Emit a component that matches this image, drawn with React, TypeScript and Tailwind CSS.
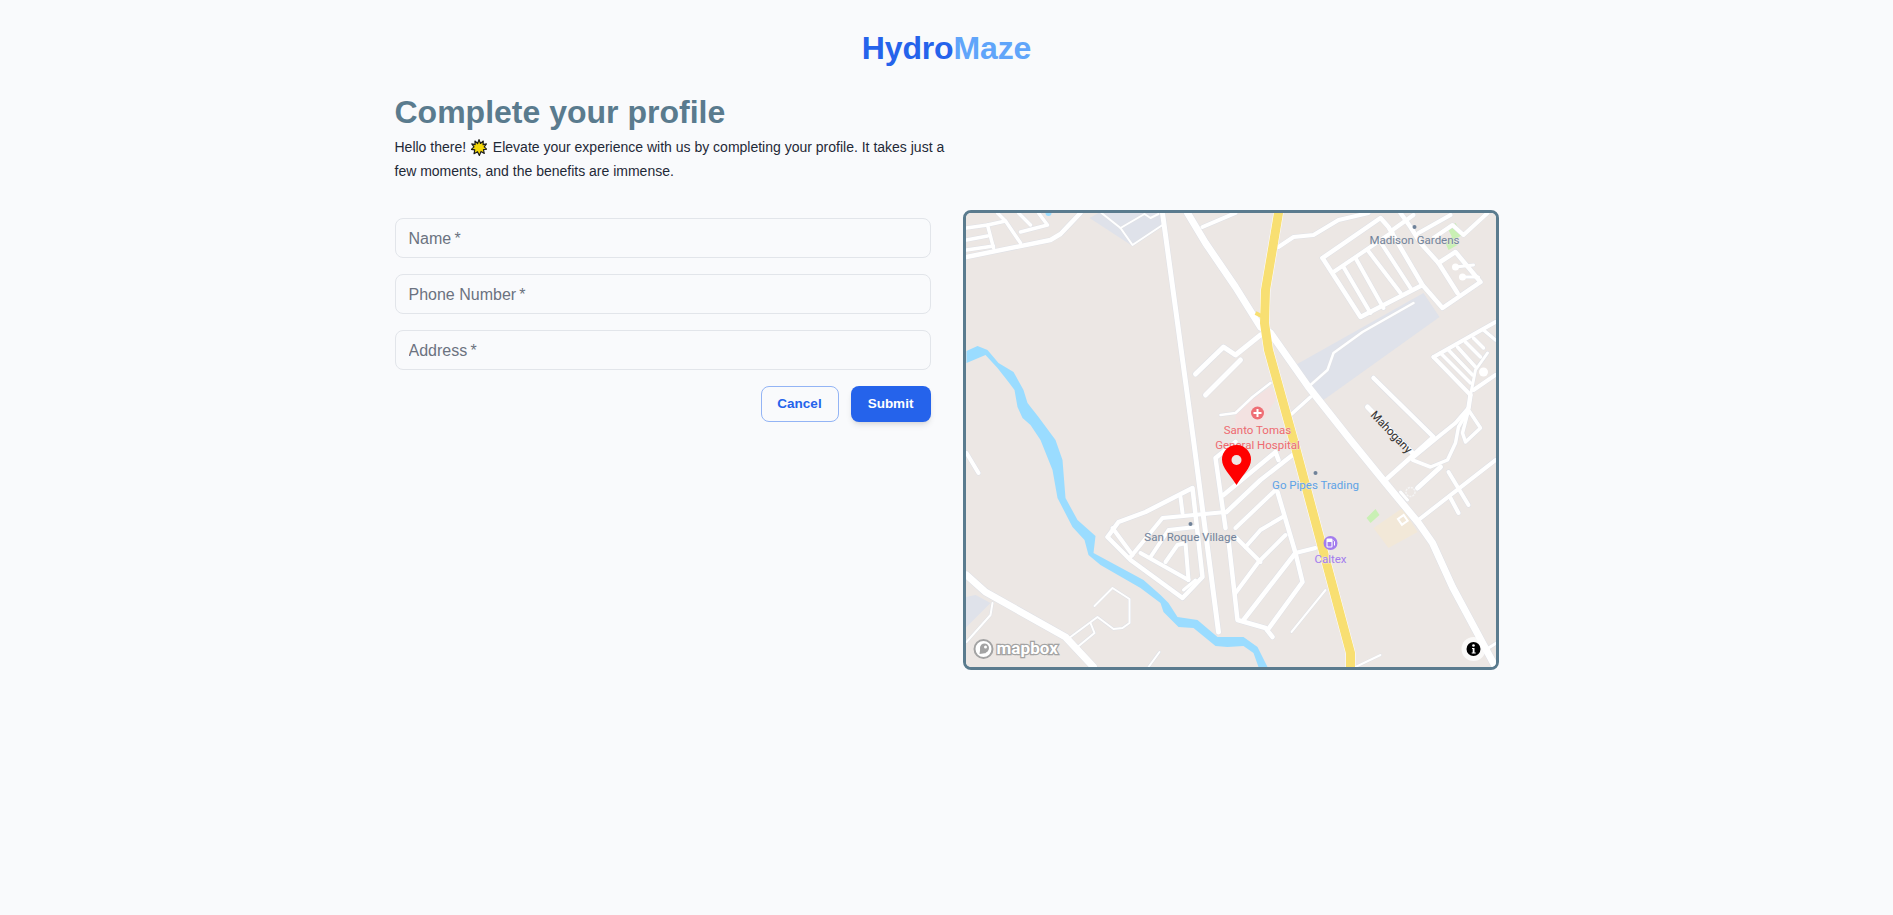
const WATER =
  "M966 351 977 346 987 350 998 363 1013 372 1023 390 1027 403 1038 417 1055 440 1062 460 1065 498 1077 520 1095 536 1093 553 1143 580 1160 595 1168 603 1177 617 1197 620 1217 637 1243 637 1257 647 1267 667 1258 667 1253 653 1243 646 1227 647 1215 646 1193 628 1178 627 1163 612 1160 603 1140 588 1100 565 1088 555 1084 540 1072 527 1057 498 1052 470 1040 440 1030 425 1022 418 1017 407 1014 390 1008 382 997 368 985 355 966 363Z";

// [path, width]
const ROADS: [string, number][] = [
  // top left estate
  ["M966 257 1050 240 1060 234 1080 213", 4.5],
  ["M966 228 987 225 1005 221 997 213", 3.5],
  ["M966 240 987 236", 3.5],
  ["M966 250 993 246", 3.5],
  ["M987 225 993 248", 3.5],
  ["M1005 221 1020 243", 3.5],
  ["M1020 232 1047 225 1038 213", 3.5],
  ["M1018 213 1030 225", 3.5],
  ["M1101 213 1120 228 1132 245 1162 225", 2],
  ["M1120 228 1144 214 1150 218 1158 214", 2],
  // long north-south road
  ["M1162 213 1193 440 1218 632", 5],
  // main diagonal
  ["M1187 213 1205 243 1235 287 1260 327 1270 333 1308 387 1350 440 1385 483 1418 523 1432 543 1452 587 1495 667", 7],
  ["M1202 227 1235 213", 4],
  // north of highway
  ["M1278 247 1293 237 1313 235 1338 220 1368 213", 4],
  // Madison Gardens
  ["M1322 258 1380 218 1388 227 1422 285 1442 308 1480 282 1455 252 1438 263 1457 293", 4.5],
  ["M1322 258 1360 317 1422 285", 4.5],
  ["M1333 272 1392 232", 4],
  ["M1343 267 1370 313", 4],
  ["M1355 258 1383 308", 4],
  ["M1367 250 1400 293", 4],
  ["M1380 242 1410 288", 4],
  ["M1400 213 1410 227 1420 243 1438 263", 4.5],
  ["M1392 230 1413 215", 4],
  ["M1418 233 1450 215", 4],
  ["M1433 238 1452 225 1463 235 1487 213", 4],
  ["M1473 265 1455 267", 3],
  ["M1478 277 1462 277", 3],
  // gray strip path
  ["M1413 303 1362 332 1333 353 1327 370 1310 385", 2.5],
  ["M1290 415 1310 397", 3.5],
  // central spur
  ["M1195 374 1223 347 1235 355 1260 335", 5],
  ["M1205 395 1240 360", 5],
  // hospital lane
  ["M1220 415 1235 413 1252 397 1270 383", 2.5],
  // Mahogany
  ["M1373 378 1433 437 1385 480", 4.5],
  ["M1367 407 1412 453", 5],
  // junction
  ["M1412 458 1440 435 1455 423 1468 408", 4],
  ["M1412 460 1430 467 1447 460 1455 443 1458 427 1468 410", 3.5],
  ["M1417 488 1440 467", 5],
  ["M1468 410 1480 428 1465 442 1462 433 1468 410", 3.5],
  // right comb
  ["M1433 357 1495 322", 4],
  ["M1433 357 1470 395", 4],
  ["M1440 353 1470 383", 3.5],
  ["M1448 350 1472 375", 3.5],
  ["M1457 347 1475 367", 3.5],
  ["M1465 342 1480 357", 3.5],
  ["M1473 338 1483 348", 3.5],
  ["M1483 330 1495 340", 3.5],
  ["M1470 395 1475 370 1487 353", 3],
  ["M1473 390 1495 375", 4],
  ["M1470 395 1468 408", 4.5],
  // lower right
  ["M1418 520 1495 460", 4],
  ["M1448 472 1468 505", 4],
  ["M1450 498 1458 513", 4],
  ["M1488 648 1496 643", 3],
  ["M1400 492 1407 500", 3],
  ["M1355 667 1380 655", 2],
  ["M1325 590 1291 632", 2],
  // bottom left
  ["M966 575 985 592 1065 637 1093 667", 7],
  ["M992 603 990 615 966 642", 2],
  ["M966 453 978 473", 4],
  ["M1094 606 1112 588 1129 599 1129 623 1122 628 1113 629 1097 617 1070 637", 2],
  ["M1090 623 1094 633 1077 647", 2],
  ["M1159 652 1148 667", 2],
  // San Roque Village
  ["M1107 537 1118 522 1145 512 1192 488 1202 577 1182 598 1130 560 1107 537", 4.5],
  ["M1112 528 1132 555", 4],
  ["M1130 557 1162 518 1225 512", 4],
  ["M1150 557 1168 530 1195 527", 4],
  ["M1165 562 1177 545 1185 543 1188 580", 4],
  ["M1180 497 1182 513", 4],
  ["M1140 553 1188 580", 4],
  ["M1183 590 1195 580", 3],
  // second north-south road and estate
  ["M1235 442 1215 458 1225 528", 4.5],
  ["M1223 495 1275 452 1278 460", 4.5],
  ["M1226 512 1260 480 1292 455", 4.5],
  ["M1235 537 1260 562", 4],
  ["M1228 540 1237 620 1265 628 1272 637", 4.5],
  ["M1277 492 1295 553 1302 582 1267 630", 4.5],
  ["M1295 553 1243 620", 4.5],
  ["M1285 535 1258 562 1235 593", 4],
  ["M1282 517 1260 530 1245 547", 4],
  ["M1275 490 1235 528", 4],
  ["M1295 553 1315 548", 4],
];

function MapView() {
  return (
    <svg viewBox="965.5 213 530 454" className="block w-full h-full">
      <rect x="965" y="213" width="531" height="454" fill="#ece7e4" />

      {/* land use */}
      <path d="M1089 218 1098 213 1160 213 1162 225 1132 246Z" fill="#dfe2ea" />
      <path d="M1295 365 1423 293 1439 317 1323 400 1310 385Z" fill="#dfe2ea" />
      <path d="M965 597 975 595 990 603 965 628Z" fill="#dfe2ea" />
      <path d="M1235 410 1270 387 1277 397 1258 427 1235 433Z" fill="#f3e2e1" />
      <path d="M1373 528 1402 508 1417 532 1388 548Z" fill="#f2e8d8" />
      <path d="M1366 518 1375 509 1379 515 1370 523Z" fill="#c9f0b4" />
      <path d="M1447 228 1455 223 1462 235 1453 240Z" fill="#c9f0b4" />
      <path d="M1445 243 1452 236 1457 245 1448 250Z" fill="#c9f0b4" />

      <path d={WATER} fill="#9adcff" />
      <circle cx="1048" cy="213" r="3" fill="#9adcff" />

      {/* roads */}
      <g fill="none" strokeLinecap="round" strokeLinejoin="round">
        {ROADS.map(([d, w], i) => (
          <path key={"c" + i} d={d} stroke="#dfe1e6" strokeWidth={w + 1} />
        ))}
        {ROADS.map(([d, w], i) => (
          <path key={"r" + i} d={d} stroke="#ffffff" strokeWidth={w} />
        ))}
        <path d="M1278 213 1273 243 1265 290 1264 323 1268 350 1293 440 1350 653 1350 667" stroke="#ffffff" strokeWidth="10" />
        <path d="M1255 313 1263 317" stroke="#f8df72" strokeWidth="4" strokeLinecap="butt" />
        <path d="M1278 213 1273 243 1265 290 1264 323 1268 350 1293 440 1350 653 1350 667" stroke="#f8df72" strokeWidth="9" />
      </g>

      <circle cx="1410" cy="492" r="4.5" fill="none" stroke="#f5f5f5" strokeWidth="1.5" strokeDasharray="2 1" />
      <circle cx="1455" cy="267" r="3.5" fill="#fff" />
      <circle cx="1462" cy="277" r="3.5" fill="#fff" />
      <circle cx="1483" cy="372" r="4.5" fill="#fff" />
      <rect x="1399" y="516" width="7" height="7" fill="#f2e8d8" stroke="#fff" strokeWidth="2" transform="rotate(-35 1403 520)" />

      {/* labels */}
      <g className="font-['Roboto',sans-serif] text-[11.5px] [paint-order:stroke]" textAnchor="middle" stroke="#ece7e4" strokeWidth="1" strokeOpacity="0.8">
        <text x="1414" y="244" fill="#71839b">Madison Gardens</text>
        <text x="1257" y="434" fill="#ee6a70">Santo Tomas</text>
        <text x="1257" y="449" fill="#ee6a70">General Hospital</text>
        <text x="1315" y="489" fill="#5ea3e6">Go Pipes Trading</text>
        <text x="1330" y="563" fill="#a37cee">Caltex</text>
        <text x="1190" y="541" fill="#71839b">San Roque Village</text>
        <text x="1391" y="436" fill="#333333" transform="rotate(46 1391 432)">Mahogany</text>
      </g>
      <circle cx="1414" cy="227" r="2" fill="#6f8299" />
      <circle cx="1315" cy="473" r="2" fill="#6f8299" />
      <circle cx="1190" cy="524" r="2" fill="#6f8299" />

      {/* hospital icon */}
      <circle cx="1257" cy="413" r="6.5" fill="#ee6f75" />
      <path d="M1257 409v8M1253 413h8" stroke="#fff" strokeWidth="2" />

      {/* fuel icon */}
      <circle cx="1330" cy="543" r="7" fill="#a37cee" />
      <rect x="1326.5" y="539" width="5" height="8" rx="0.8" fill="none" stroke="#fff" strokeWidth="1.1" />
      <rect x="1326.5" y="539" width="5" height="3" fill="#fff" />
      <path d="M1333 540.500l1 1v4" fill="none" stroke="#fff" strokeWidth="1" />

      {/* marker */}
      <path d="M1236 485C1230 475 1221.500 468 1221.500 459.500A14.500 14.500 0 0 1 1250.500 459.500C1250.500 468 1242 475 1236 485Z" fill="#ff0000" />
      <circle cx="1236" cy="460" r="5" fill="#efe6e4" />

      {/* mapbox logo */}
      <circle cx="983" cy="649" r="9" fill="#fff" stroke="#a3a3a3" strokeWidth="2" />
      <circle cx="984" cy="648" r="4.500" fill="#a3a3a3" />
      <path d="M979 654 980 647 986 653Z" fill="#a3a3a3" />
      <circle cx="985" cy="647" r="1.500" fill="#fff" />
      <text x="996" y="654" className="font-['Roboto',sans-serif] font-bold text-[17px] tracking-[0.1px] [paint-order:stroke]" fill="#ffffff" stroke="#a3a3a3" strokeWidth="2.500">mapbox</text>

      {/* info button */}
      <circle cx="1473" cy="649" r="12" fill="#ffffff" fillOpacity="0.75" />
      <circle cx="1473" cy="649" r="7" fill="#000000" />
      <circle cx="1473" cy="645.500" r="1.300" fill="#fff" />
      <path d="M1471.500 648h2.500v4.500h1.200v1h-4v-1h1v-3.500h-.7z" fill="#fff" />
    </svg>
  );
}

function Burst() {
  return (
    <svg viewBox="0 0 14 15" className="inline-block w-[16px] h-[17px] align-[-4px] mx-[1.5px]">
      <path
        d="M7 .5 8.300 4 10.800 1.800 10.600 5 13.600 4.300 11.600 7 13.800 9 10.900 9.400 11.700 12.800 8.800 11 7.300 14.500 5.700 11.200 2.600 13 3.300 9.600.2 9.200 2.600 7 .6 4.300 3.600 5 3.400 1.800 5.800 4Z"
        fill="#f5d90a"
        stroke="#1c1c1c"
        strokeWidth="1"
        strokeLinejoin="round"
      />
    </svg>
  );
}

function Field({ label }: { label: string }) {
  return (
    <input
      type="text"
      placeholder={label}
      className="h-10 w-full rounded-lg border border-[#e2e5ea] bg-[#f9fafc] px-[13px] pt-[2px] text-base text-gray-700 outline-none placeholder:text-[#6b7280]"
    />
  );
}

export default function App() {
  return (
    <div className="min-h-[915px] bg-[#f9fafc] font-['Liberation_Sans',Arial,sans-serif] pt-7">
      <div className="text-center text-[32px] leading-10 font-bold tracking-[-0.15px]">
        <span className="text-[#2563eb]">Hydro</span>
        <span className="text-[#60a5fa]">Maze</span>
      </div>

      <div className="mx-auto w-[1104px] mt-6">
        <h1 className="text-[32px] leading-10 font-bold text-[#5a7b8e]">Complete your profile</h1>
        <p className="mt-[3px] w-[560px] text-sm leading-6 text-[#1f2937]">
          Hello there! <Burst /> Elevate your experience with us by completing your profile. It takes just a few moments, and the benefits are immense.
        </p>

        <div className="mt-[27px] grid grid-cols-2 gap-8 items-start">
          <form className="pt-2 flex flex-col gap-4">
            <Field label={"Name\u2009*"} />
            <Field label={"Phone Number\u2009*"} />
            <Field label={"Address\u2009*"} />
            <div className="flex justify-end gap-3">
              <button type="button" className="h-9 w-[78px] rounded-lg border border-[#93b4f5] text-[13.5px] font-bold text-[#2563eb]">
                Cancel
              </button>
              <button type="button" className="h-9 w-[80px] rounded-lg bg-[#2563eb] text-[13.5px] font-bold text-white shadow-md">
                Submit
              </button>
            </div>
          </form>

          <div className="h-[460px] overflow-hidden rounded-lg border-[3px] border-[#5a7b8e]">
            <MapView />
          </div>
        </div>
      </div>
    </div>
  );
}
